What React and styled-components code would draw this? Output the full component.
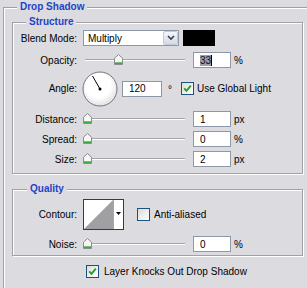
import React from "react";
import styled, { createGlobalStyle, css } from "styled-components";

const BG = "#dcdce0";

const GlobalStyle = createGlobalStyle`
  html, body { margin: 0; padding: 0; background: ${BG}; overflow: hidden; }
  body { font-family: "Liberation Sans", Arial, sans-serif; font-size: 10px; color: #000; }
`;

const etched = css`
  border: 1px solid #a0a0a6;
  box-shadow: inset 1px 1px 0 #fff, 1px 1px 0 #fff;
`;

const Outer = styled.div`
  position: relative;
  box-sizing: border-box;
  margin: 7px 0 0 3px;
  width: 304px;
  height: 281px;
  padding: 14px 0 0 8px;
  border-top: 1px solid #a0a0a6;
  border-left: 1px solid #a0a0a6;
  box-shadow: inset 1px 1px 0 #fff;
`;

const Legend = styled.span`
  position: absolute;
  top: -7px;
  left: ${(p) => p.$left}px;
  padding: 0 3px;
  background: ${BG};
  color: #1f43c4;
  font-weight: bold;
  font-size: 10px;
  line-height: 12px;
  white-space: nowrap;
`;

const Group = styled.div`
  position: relative;
  box-sizing: border-box;
  width: 291px;
  margin-top: ${(p) => p.$mt || 0}px;
  padding: ${(p) => p.$pt}px 0 ${(p) => p.$pb}px 0;
  display: flex;
  flex-direction: column;
  ${etched}
`;

const Row = styled.div`
  display: flex;
  align-items: center;
  height: ${(p) => p.$h || 16}px;
  margin-top: ${(p) => p.$mt || 0}px;
  margin-left: ${(p) => p.$ml || 0}px;
`;

const Label = styled.span`
  flex: none;
  width: 64px;
  margin-right: 6px;
  text-align: right;
  white-space: nowrap;
`;

const Select = styled.div`
  box-sizing: border-box;
  display: flex;
  align-items: center;
  width: 96px;
  height: 16px;
  border: 1px solid #8d99a8;
  background: #fff;
`;

const SelectText = styled.span`
  flex: 1;
  padding-left: 4px;
`;

const SelectArrow = styled.span`
  box-sizing: border-box;
  display: flex;
  align-items: center;
  justify-content: center;
  width: 15px;
  height: 14px;
  border: 1px solid #c3c9d6;
  border-radius: 2px;
  background: linear-gradient(#f4f6fb, #d6dae6);
`;

const Swatch = styled.div`
  width: 32px;
  height: 16px;
  margin-left: 4px;
  background: #000;
`;

const SliderBox = styled.div`
  position: relative;
  flex: none;
  width: 104px;
  height: 16px;
  margin-right: 6px;
  display: flex;
  align-items: center;
`;

const Track = styled.div`
  margin-left: 2px;
  width: 100px;
  height: 0;
  border-top: 1px solid #a4a4aa;
  border-bottom: 1px solid #fff;
`;

const Thumb = styled.svg`
  position: absolute;
  top: 2px;
`;

const Field = styled.div`
  box-sizing: border-box;
  flex: none;
  display: flex;
  align-items: center;
  width: ${(p) => p.$w || 38}px;
  height: 16px;
  margin-left: ${(p) => p.$ml || 0}px;
  padding-left: 6px;
  border: 1px solid #8d99a8;
  background: #fff;
`;

const Selected = styled.span`
  background: #9d9dab;
  color: #111;
  line-height: 11px;
`;

const Caret = styled.span`
  width: 1px;
  height: 11px;
  background: #000;
`;

const Unit = styled.span`
  margin-left: ${(p) => p.$ml || 3}px;
  align-self: ${(p) => (p.$sup ? "flex-start" : "center")};
  margin-top: ${(p) => (p.$sup ? 13 : 0)}px;
`;

const Dial = styled.svg`
  flex: none;
  margin-left: -1px;
`;

const Box = styled.span`
  box-sizing: border-box;
  flex: none;
  display: flex;
  align-items: center;
  justify-content: center;
  width: 13px;
  height: 13px;
  margin-left: ${(p) => p.$ml || 0}px;
  border: 1px solid #1c5180;
  background: linear-gradient(135deg, #dcdcd6, #ffffff);
`;

const CheckText = styled.span`
  margin-left: ${(p) => p.$ml || 4}px;
  white-space: nowrap;
`;

const Contour = styled.div`
  box-sizing: border-box;
  flex: none;
  display: flex;
  width: 41px;
  height: 31px;
  border: 1px solid #3a3a3a;
  background: #fff;
`;

const ContourCurve = styled.svg`
  flex: 1;
  display: block;
`;

const ContourArrow = styled.div`
  width: 10px;
  border-left: 1px solid #a8a8a8;
  display: flex;
  justify-content: center;
  padding-top: 12px;
  box-sizing: border-box;
`;

function Slider({ value }) {
  return (
    <SliderBox>
      <Track />
      <Thumb width="9" height="11" viewBox="0 0 9 11" style={{ left: Math.round(value * 0.93) }}>
        <path d="M4.5 0.5 L8.5 4.2 V10.5 H0.5 V4.2 Z" fill="#f6f6f6" stroke="#8c8c90" />
        <rect x="1" y="8.3" width="7" height="1.7" fill="#3caa3c" />
      </Thumb>
    </SliderBox>
  );
}

function Check({ checked, ml }) {
  return (
    <Box $ml={ml}>
      {checked && (
        <svg width="9" height="9" viewBox="0 0 9 9">
          <path d="M1.2 4.3 L3.5 6.8 L7.8 1.6" fill="none" stroke="#21a121" strokeWidth="1.9" />
        </svg>
      )}
    </Box>
  );
}

function SliderRow({ label, value, text, unit, mt }) {
  return (
    <Row $mt={mt}>
      <Label>{label}</Label>
      <Slider value={value} />
      <Field>{text}</Field>
      <Unit>{unit}</Unit>
    </Row>
  );
}

export default function App() {
  const a = (120 * Math.PI) / 180;
  const ex = 18 + 15 * Math.cos(a);
  const ey = 18 - 15 * Math.sin(a);
  return (
    <>
      <GlobalStyle />
      <Outer>
        <Legend $left={13}>Drop Shadow</Legend>
        <Group $pt={7} $pb={6}>
          <Legend $left={13}>Structure</Legend>
          <Row>
            <Label>Blend Mode:</Label>
            <Select>
              <SelectText>Multiply</SelectText>
              <SelectArrow>
                <svg width="8" height="6" viewBox="0 0 8 6">
                  <path d="M1 1 L4 4 L7 1" fill="none" stroke="#3a3f4c" strokeWidth="1.6" />
                </svg>
              </SelectArrow>
            </Select>
            <Swatch />
          </Row>
          <Row $mt={6}>
            <Label>Opacity:</Label>
            <Slider value={33} />
            <Field>
              <Selected>33</Selected>
              <Caret />
            </Field>
            <Unit>%</Unit>
          </Row>
          <Row $mt={3} $h={35}>
            <Label>Angle:</Label>
            <Dial width="36" height="36" viewBox="0 0 36 36">
              <defs>
                <radialGradient id="dialg" cx="0.45" cy="0.4" r="0.6">
                  <stop offset="0.6" stopColor="#ffffff" />
                  <stop offset="1" stopColor="#e2e2e6" />
                </radialGradient>
              </defs>
              <circle cx="18" cy="18" r="17" fill="url(#dialg)" stroke="#75757c" strokeWidth="1" />
              <line x1="18" y1="18" x2={ex} y2={ey} stroke="#000" strokeWidth="1" />
              <circle cx="18" cy="18" r="1.5" fill="#000" />
            </Dial>
            <Field $w={40} $ml={4}>120</Field>
            <Unit $ml={6} $sup>°</Unit>
            <Check checked ml={9} />
            <CheckText $ml={3}>Use Global Light</CheckText>
          </Row>
          <SliderRow label="Distance:" value={0} text="1" unit="px" mt={5} />
          <SliderRow label="Spread:" value={0} text="0" unit="%" mt={4} />
          <SliderRow label="Size:" value={0} text="2" unit="px" mt={4} />
        </Group>
        <Group $mt={15} $pt={9} $pb={3}>
          <Legend $left={14}>Quality</Legend>
          <Row $h={31}>
            <Label>Contour:</Label>
            <Contour>
              <ContourCurve viewBox="0 0 29 29" preserveAspectRatio="none">
                <polygon points="0,29 29,0 29,29" fill="#a0a0a2" />
              </ContourCurve>
              <ContourArrow>
                <svg width="5" height="3" viewBox="0 0 5 3">
                  <polygon points="0,0 5,0 2.5,3" fill="#000" />
                </svg>
              </ContourArrow>
            </Contour>
            <Check ml={13} />
            <CheckText>Anti-aliased</CheckText>
          </Row>
          <SliderRow label="Noise:" value={0} text="0" unit="%" mt={6} />
        </Group>
        <Row $mt={9} $h={13} $ml={74}>
          <Check checked />
          <CheckText $ml={5}>Layer Knocks Out Drop Shadow</CheckText>
        </Row>
      </Outer>
    </>
  );
}
